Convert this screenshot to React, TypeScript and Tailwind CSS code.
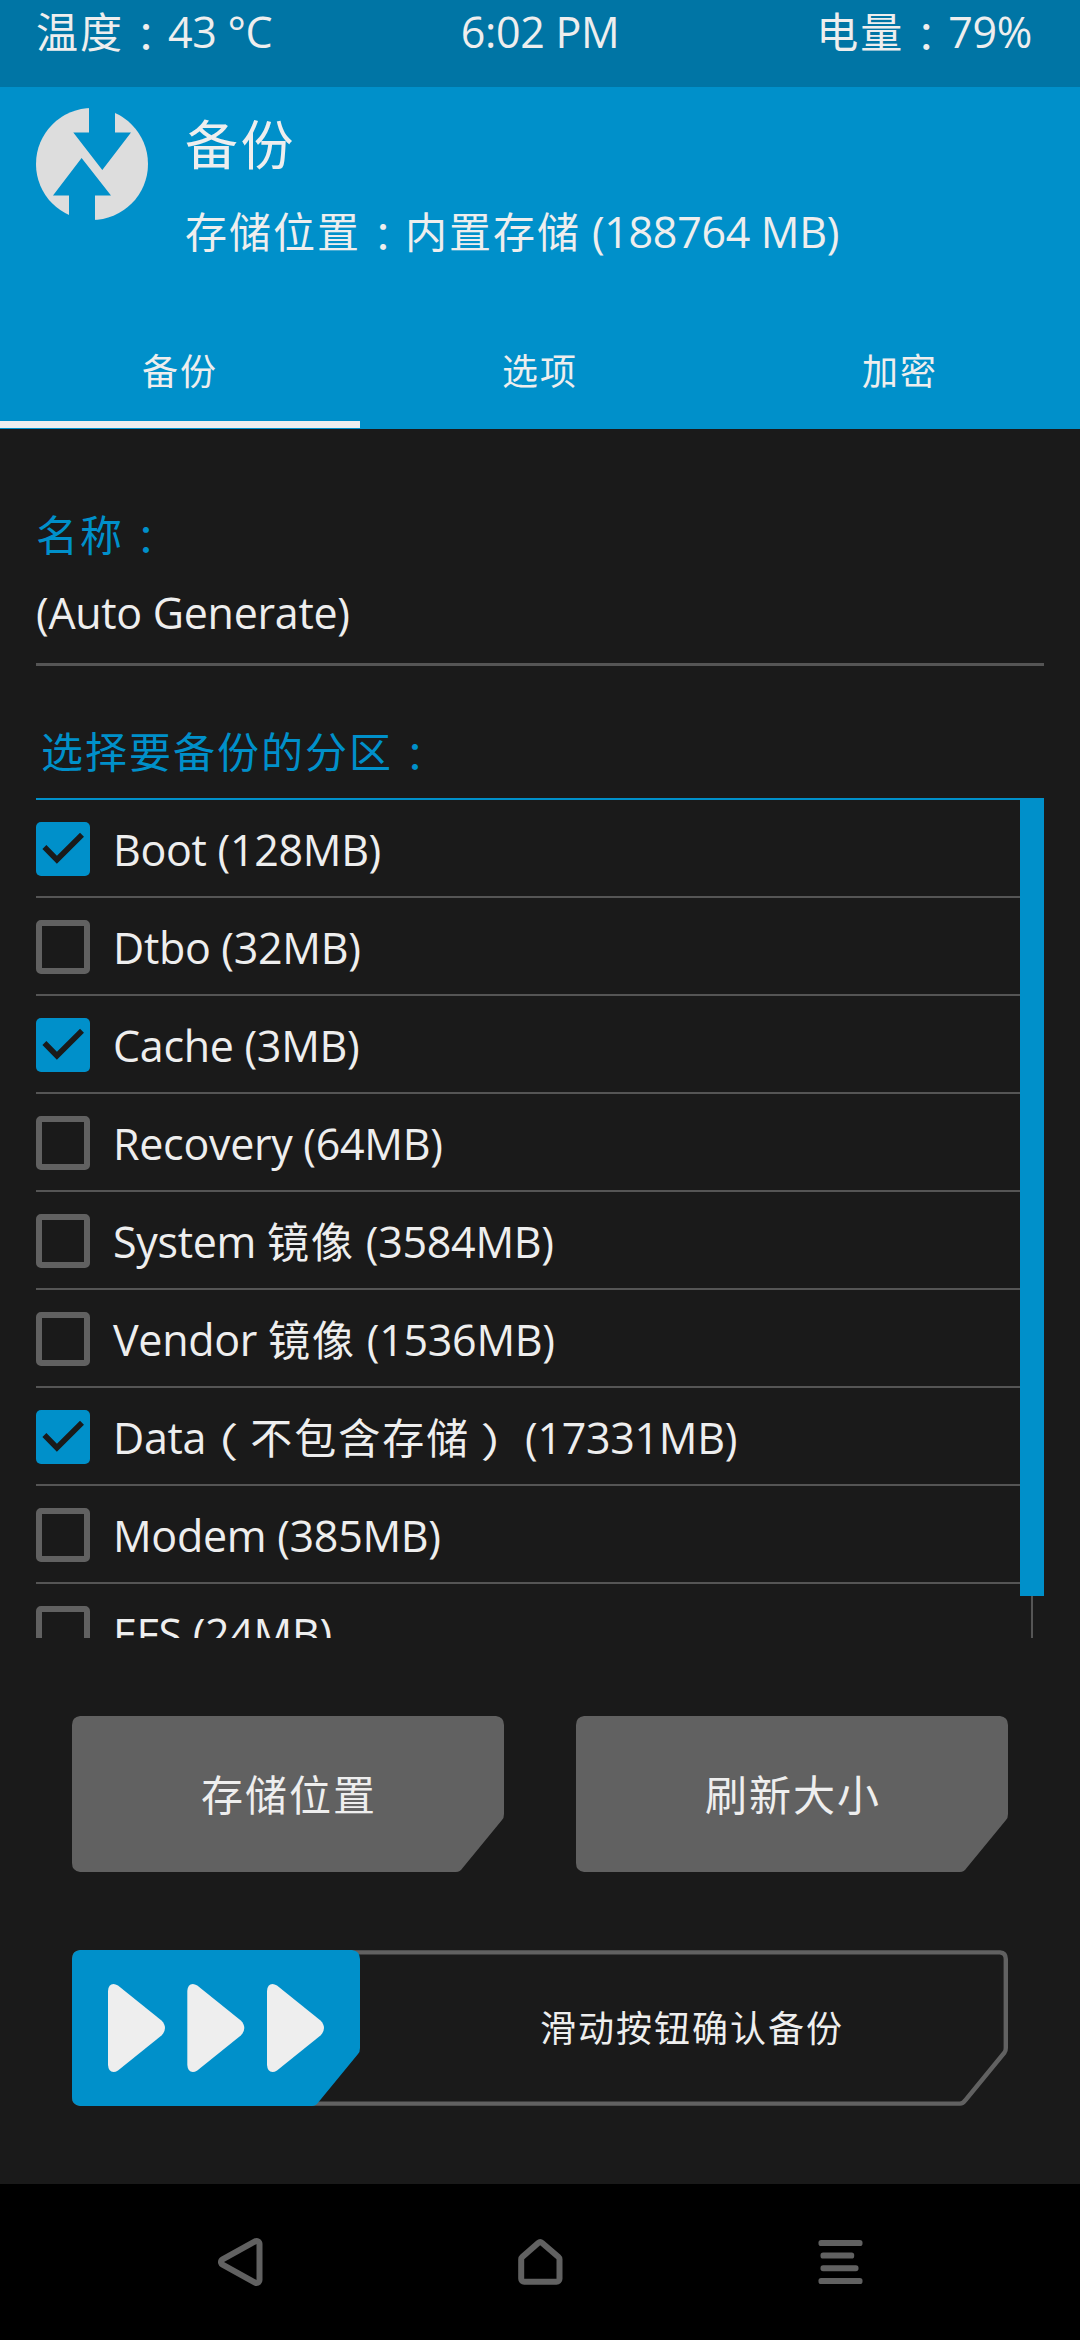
import React from 'react';

/* Splits a label into Latin, Han and full-width punctuation runs and sets each in its own face. */
function Mixed({ text, size = 'md' }: { text: string; size?: 'sm' | 'md' | 'lg' }) {
  const han = {
    sm: 'text-[36px] tracking-[2px]',
    md: 'text-[42px] tracking-[2px]',
    lg: 'text-[53px] tracking-[2.5px]',
  }[size];
  const runs = text.match(/[\u4e00-\u9fff]+|[：（）]|[^\u4e00-\u9fff：（）]+/g) ?? [];
  return (
    <>
      {runs.map((run, i) => {
        if (run === '：') {
          return (
            <span
              key={i}
              className="inline-block w-[44px] text-center align-[-3px] text-[39px] leading-[0] tracking-normal [font-family:'Noto_Sans_CJK_TC',sans-serif]"
            >
              {run}
            </span>
          );
        }
        if (run === '（') {
          return (
            <span
              key={i}
              className="mr-[12px] -ml-[12px] inline-block w-[44px] scale-x-125 align-[-3px] text-[40px] leading-[0] tracking-normal [font-family:'Noto_Sans_CJK_SC',sans-serif]"
            >
              {run}
            </span>
          );
        }
        if (run === '）') {
          return (
            <span
              key={i}
              className="-mr-[16px] ml-[16px] inline-block w-[44px] scale-x-125 align-[-3px] text-[40px] leading-[0] tracking-normal [font-family:'Noto_Sans_CJK_SC',sans-serif]"
            >
              {run}
            </span>
          );
        }
        if (/[\u4e00-\u9fff]/.test(run)) {
          return (
            <span key={i} className={`leading-[0] [font-family:'Noto_Sans_CJK_SC',sans-serif] ${han}`}>
              {run}
            </span>
          );
        }
        return <span key={i}>{run}</span>;
      })}
    </>
  );
}

function Logo() {
  return (
    <svg className="h-[112px] w-[112px] shrink-0" viewBox="36 108 112 112">
      <circle cx="92" cy="164" r="56" fill="#dddddd" />
      <path d="M89 100H115V132.5H131L102.3 170L73.3 132.5H89Z" fill="#0090ca" />
      <path d="M69 228V195.5H53L81.6 158L111 195.5H95V228Z" fill="#0090ca" />
    </svg>
  );
}

function Checkbox({ checked }: { checked: boolean }) {
  if (!checked) return <span className="size-[54px] shrink-0 rounded-[5px] border-[6px] border-[#616161]" />;
  return (
    <span className="size-[54px] shrink-0 rounded-[5px] bg-[#0090ca]">
      <svg viewBox="0 0 54 54" className="size-[54px]">
        <path d="M8.4 25L20.9 37.7L46 12.7" fill="none" stroke="#1a1a1a" strokeWidth="5.6" />
      </svg>
    </span>
  );
}

const partitions = [
  { label: 'Boot (128MB)', checked: true },
  { label: 'Dtbo (32MB)', checked: false },
  { label: 'Cache (3MB)', checked: true },
  { label: 'Recovery (64MB)', checked: false },
  { label: 'System 镜像 (3584MB)', checked: false },
  { label: 'Vendor 镜像 (1536MB)', checked: false },
  { label: 'Data（不包含存储） (17331MB)', checked: true },
  { label: 'Modem (385MB)', checked: false },
  { label: 'EFS (24MB)', checked: false },
];

function CutButton({ label }: { label: string }) {
  return (
    <button className="relative h-[156px] w-[432px] pl-[2px] text-center leading-[158px]">
      <svg className="absolute inset-0" width="432" height="156" viewBox="0 0 432 156">
        <path
          d="M8 0H424Q432 1 432 9V98Q432 102 430 104L391 151.5Q388 156 384 156H8Q0 155 0 147V9Q0 1 8 0Z"
          fill="#616161"
        />
      </svg>
      <span className="relative">
        <Mixed text={label} />
      </span>
    </button>
  );
}

function Slider() {
  return (
    <div className="relative mx-[72px] mt-[78px] h-[156px] pl-[468px] text-[36px] leading-[158px]">
      <svg className="absolute inset-0" width="936" height="156" viewBox="0 0 936 156">
        <path
          d="M8 2.4H928Q933.8 3 933.8 9V98Q933.8 101 932.5 102.5L893.5 150Q891 153.6 888 153.6H8Q2.2 153 2.2 147V9Q2.2 3 8 2.4Z"
          fill="none"
          stroke="#616161"
          strokeWidth="4.4"
        />
        <path
          d="M8 0H280Q288 1 288 9V98Q288 102 286 104L247 151.5Q244 156 240 156H8Q0 155 0 147V9Q0 1 8 0Z"
          fill="#0090ca"
        />
        <g fill="#eeeeee">
          {[0, 79.3, 159].map((x) => (
            <path
              key={x}
              transform={`translate(${x} 0)`}
              d="M36 41Q36.5 34 41.5 34Q43.5 34 46 35.5L89.5 70.5Q93 74 93 78Q93 82 89.5 85.5L46 120.5Q43.5 122 41.5 122Q36.5 122 36 115Z"
            />
          ))}
        </g>
      </svg>
      <Mixed text="滑动按钮确认备份" size="sm" />
    </div>
  );
}

function NavBar() {
  return (
    <nav className="mt-[78px] grid h-[156px] grid-cols-3 place-items-center bg-black px-[90px]">
      {['M6 24L38.5 6V42Z', 'M22.2 7.2L38.5 21.3V40.7H6.2V21.3Z'].map((d) => (
        <svg key={d} className="overflow-visible" width="44" height="48" viewBox="0 0 44 48">
          <path d={d} fill="none" stroke="#616161" strokeWidth="12" strokeLinejoin="round" />
          <path d={d} fill="#000000" />
        </svg>
      ))}
      <svg className="overflow-visible" width="44" height="48" viewBox="0 0 44 48" fill="#616161">
        <rect x="0.5" y="2" width="44" height="6" rx="2.6" />
        <rect x="2.5" y="14.5" width="33.7" height="6" rx="2.6" />
        <rect x="2.5" y="27.2" width="38" height="6" rx="2.6" />
        <rect x="0.5" y="40" width="44" height="6" rx="2.6" />
      </svg>
    </nav>
  );
}

export default function App() {
  return (
    <div className="flex h-[2340px] w-[1080px] flex-col overflow-hidden bg-[#1a1a1a] text-[43px] leading-[60px] tracking-[-0.3px] whitespace-pre text-[#eeeeee] [font-family:'Open_Sans','Noto_Sans_CJK_SC',sans-serif]">
      <div className="grid h-[87px] shrink-0 grid-cols-3 bg-[#0075a5] pt-[2px]">
        <span className="pl-[36px]">
          <Mixed text="温度：43 °C" />
        </span>
        <span className="text-center">6:02 PM</span>
        <span className="pr-[48px] text-right">
          <Mixed text="电量：79%" />
        </span>
      </div>

      <header className="flex h-[342px] shrink-0 flex-col justify-between bg-[#0090ca]">
        <div className="flex gap-[37px] pt-[21px] pl-[36px]">
          <Logo />
          <div className="pt-[2px]">
            <h1 className="text-[53px] leading-[70px]">
              <Mixed text="备份" size="lg" />
            </h1>
            <p className="mt-[22px]">
              <Mixed text="存储位置：内置存储 (188764 MB)" />
            </p>
          </div>
        </div>
        <div className="mb-[1px] grid h-[99px] grid-cols-3 text-center text-[36px] leading-[50px]">
          {['备份', '选项', '加密'].map((tab, i) => (
            <div
              key={tab}
              className={i === 0 ? 'border-b-[7px] border-[#eeeeee] pt-[18px]' : 'border-b-[7px] border-transparent pt-[18px]'}
            >
              <Mixed text={tab} size="sm" />
            </div>
          ))}
        </div>
      </header>

      <main className="px-[36px] pt-[76px]">
        <div className="text-[#0090ca]">
          <Mixed text="名称：" />
        </div>
        <div className="mt-[18px] h-[83px] border-b-[3px] border-[#555555]">(Auto Generate)</div>
        <div className="mt-[56px] pl-[5px] text-[#0090ca]">
          <Mixed text="选择要备份的分区：" />
        </div>
        <div className="mt-[16px] flex h-[840px] overflow-hidden">
          <ul className="flex-1 border-t-2 border-[#0090ca]">
            {partitions.map((p) => (
              <li key={p.label} className="flex h-[98px] items-center gap-[23px] border-b-2 border-[#555555] pt-[2px]">
                <Checkbox checked={p.checked} />
                <span className="pt-[2px]">
                  <Mixed text={p.label} />
                </span>
              </li>
            ))}
          </ul>
          <div className="flex w-[24px] flex-col items-center">
            <div className="h-[798px] w-full shrink-0 bg-[#0090ca]" />
            <div className="w-[2px] flex-1 bg-[#555555]" />
          </div>
        </div>
      </main>

      <div className="mt-[78px] flex gap-[72px] px-[72px]">
        <CutButton label="存储位置" />
        <CutButton label="刷新大小" />
      </div>
      <Slider />
      <NavBar />
    </div>
  );
}
